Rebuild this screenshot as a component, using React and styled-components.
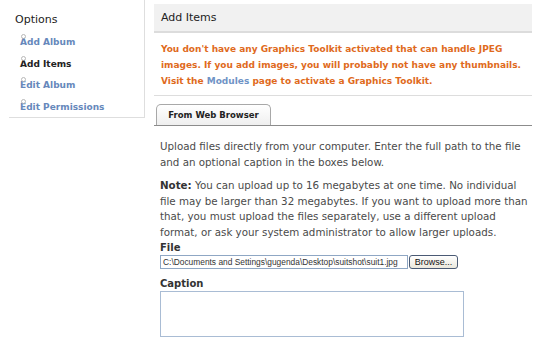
import React from "react";
import styled, { createGlobalStyle } from "styled-components";

const GlobalStyle = createGlobalStyle`
  html, body {
    margin: 0;
    padding: 0;
    background: #fff;
  }
  body {
    font-family: "DejaVu Sans", Verdana, sans-serif;
    font-size: 9px;
    color: #444;
  }
`;

const Page = styled.div`
  display: flex;
  align-items: flex-start;
  width: 540px;
  height: 341px;
  overflow: hidden;
`;

const Sidebar = styled.div`
  margin-left: 9px;
  width: 136px;
  height: 118px;
  padding: 13px 0 0 6px;
  box-sizing: border-box;
  border-right: 1px solid #dedede;
  border-bottom: 1px solid #dedede;
`;

const SideTitle = styled.h3`
  margin: 0 0 5px;
  font-size: 11px;
  font-weight: normal;
  line-height: 14px;
  color: #222;
`;

const SideList = styled.ul`
  list-style: none;
  margin: 0;
  padding: 0 0 0 5px;
`;

const SideItem = styled.li`
  position: relative;
  height: 21.5px;
  line-height: 21.5px;
  font-size: 9px;
  font-weight: bold;
  color: ${(p) => (p.$active ? "#222" : "#6688bb")};

  &::before {
    content: "";
    position: absolute;
    left: 1px;
    top: 2px;
    width: 3px;
    height: 3px;
    border: 1px solid #b8b8b8;
    border-radius: 50%;
  }
`;

const Main = styled.div`
  margin-left: 9px;
  width: 378px;
`;

const Header = styled.h2`
  margin: 4px 0 0;
  height: 27px;
  padding-left: 7px;
  background: #f1f1f1;
  border-bottom: 2px solid #dcdcdc;
  font-size: 11px;
  font-weight: normal;
  line-height: 28px;
  color: #222;
`;

const Warning = styled.p`
  margin: 0;
  padding: 8px 7px 6px;
  border-bottom: 1px solid #dddddd;
  font-size: 9px;
  font-weight: bold;
  line-height: 16px;
  color: #e06a1c;

  a {
    color: #6f93c6;
    text-decoration: none;
  }
`;

const TabBar = styled.div`
  display: flex;
  margin-top: 8px;
  padding-left: 2px;
  border-bottom: 1px solid #8c8c8c;
`;

const Tab = styled.div`
  width: 115px;
  height: 21px;
  box-sizing: border-box;
  border: 1px solid #a8a8a8;
  border-bottom: none;
  border-radius: 5px 5px 0 0;
  background: linear-gradient(#ffffff, #efefef);
  font-size: 8.5px;
  font-weight: bold;
  line-height: 20px;
  text-align: center;
  color: #222;
`;

const Body = styled.div`
  padding: 13px 2px 0 6px;
`;

const Para = styled.p`
  margin: 0 0 ${(p) => (p.$last ? 1 : 8)}px;
  font-size: 10.3px;
  line-height: 15.5px;
  color: #4a4a4a;

  b {
    color: #333;
  }
`;

const Label = styled.div`
  font-size: 10px;
  font-weight: bold;
  line-height: 13px;
  color: #333;
  margin-top: ${(p) => p.$gap || 0}px;
`;

const FileRow = styled.div`
  display: flex;
  align-items: center;
  margin-top: 1px;
`;

const FileInput = styled.input`
  width: 248px;
  height: 14px;
  box-sizing: border-box;
  margin: 0;
  padding: 0 2px;
  border: 1px solid #8fa7c4;
  font-family: "Liberation Sans", Arial, sans-serif;
  font-size: 8.4px;
  color: #333;
`;

const BrowseButton = styled.button`
  margin-left: 1px;
  width: 49px;
  height: 14px;
  padding: 0;
  border: 1px solid #4a5a74;
  border-radius: 3px;
  background: linear-gradient(#ffffff, #ebe8dc);
  font-family: "Liberation Sans", Arial, sans-serif;
  font-size: 9px;
  line-height: 12px;
  color: #111;
`;

const Caption = styled.textarea`
  display: block;
  width: 304px;
  height: 46px;
  box-sizing: border-box;
  margin: 1px 0 0;
  border: 1px solid #a9bcd4;
  resize: none;
`;

const sideItems = [
  { label: "Add Album" },
  { label: "Add Items", active: true },
  { label: "Edit Album" },
  { label: "Edit Permissions" },
];

export default function App() {
  return (
    <>
      <GlobalStyle />
      <Page>
        <Sidebar>
          <SideTitle>Options</SideTitle>
          <SideList>
            {sideItems.map((item) => (
              <SideItem key={item.label} $active={item.active}>
                {item.label}
              </SideItem>
            ))}
          </SideList>
        </Sidebar>
        <Main>
          <Header>Add Items</Header>
          <Warning>
            You don't have any Graphics Toolkit activated that can handle JPEG
            images. If you add images, you will probably not have any
            thumbnails. Visit the <a href="#">Modules</a> page to activate a
            Graphics Toolkit.
          </Warning>
          <TabBar>
            <Tab>From Web Browser</Tab>
          </TabBar>
          <Body>
            <Para>
              Upload files directly from your computer. Enter the full path to
              the file and an optional caption in the boxes below.
            </Para>
            <Para $last>
              <b>Note:</b> You can upload up to 16 megabytes at one time. No
              individual file may be larger than 32 megabytes. If you want to
              upload more than that, you must upload the files separately, use
              a different upload format, or ask your system administrator to
              allow larger uploads.
            </Para>
            <Label>File</Label>
            <FileRow>
              <FileInput
                readOnly
                value="C:\Documents and Settings\gugenda\Desktop\suitshot\suit1.jpg"
              />
              <BrowseButton>Browse...</BrowseButton>
            </FileRow>
            <Label $gap={8}>Caption</Label>
            <Caption />
          </Body>
        </Main>
      </Page>
    </>
  );
}
